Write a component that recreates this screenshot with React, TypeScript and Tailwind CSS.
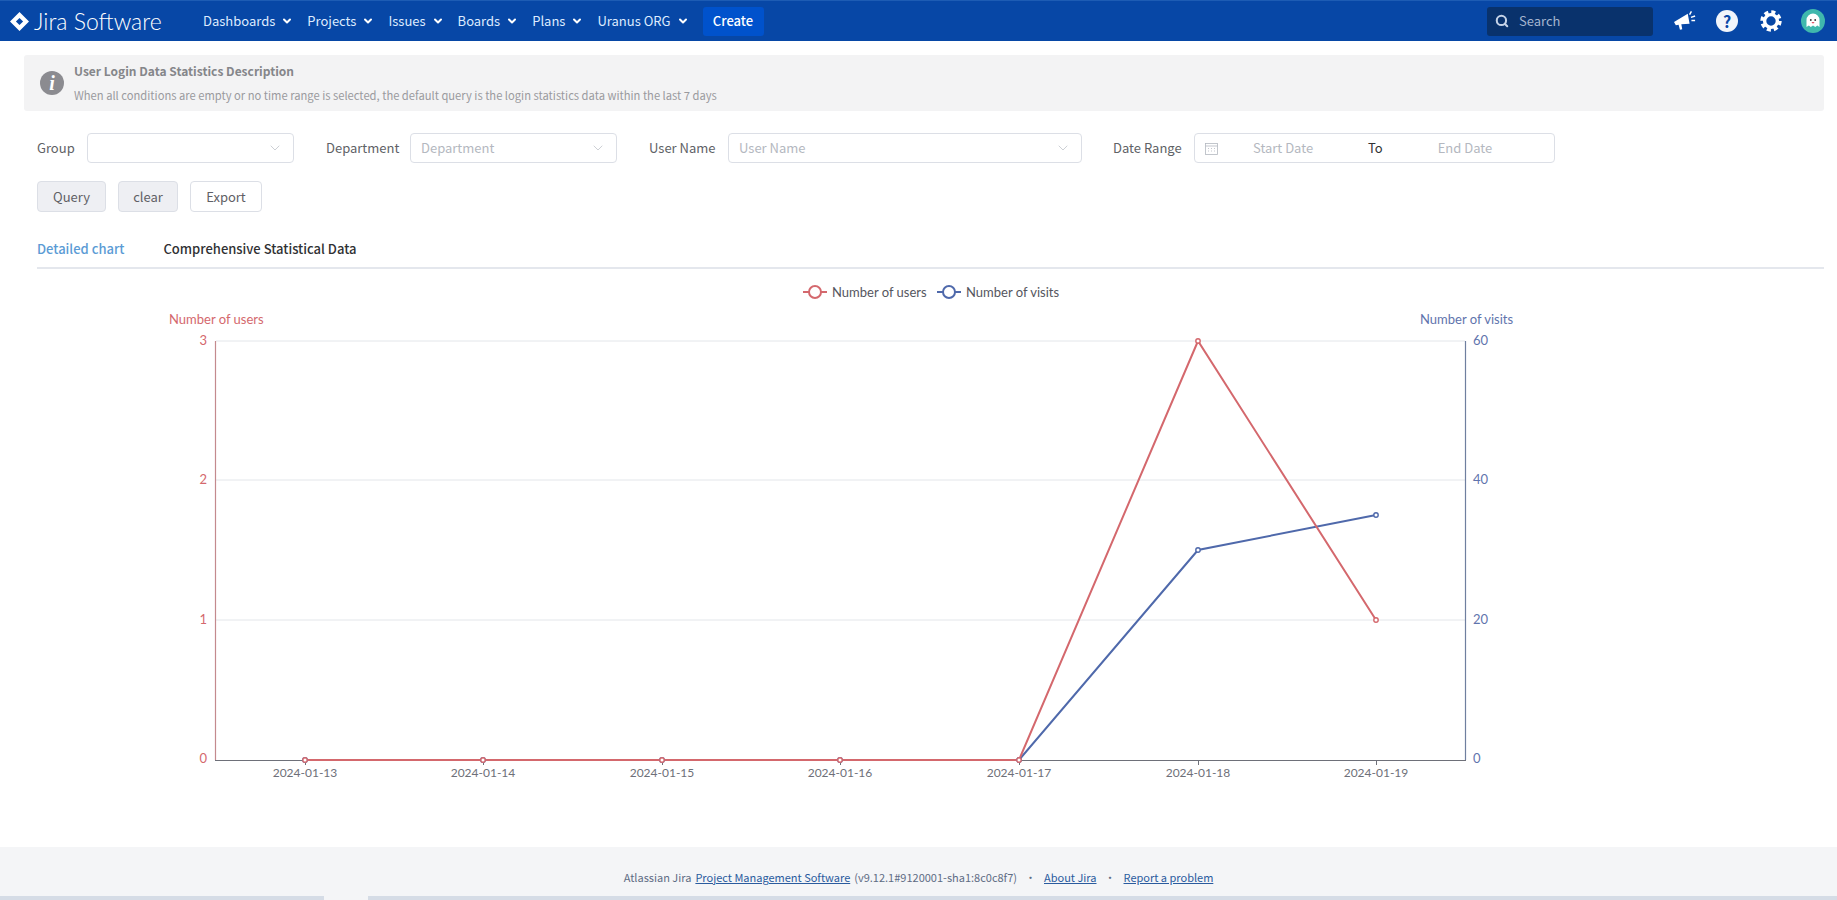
import { ChevronDown, Search } from 'lucide-react';

const navItems = ['Dashboards', 'Projects', 'Issues', 'Boards', 'Plans', 'Uranus ORG'];
const dates = ['2024-01-13', '2024-01-14', '2024-01-15', '2024-01-16', '2024-01-17', '2024-01-18', '2024-01-19'];
const xs = [305, 483, 662, 840, 1019, 1198, 1376];
const users = [760, 760, 760, 760, 760, 341, 620];
const visits = [760, 760, 760, 760, 760, 550, 515];
const RED = '#d4686d';
const BLUE = '#4f69ab';

function Logo() {
    return (
        <div className="flex items-center">
            <svg width="19" height="19" viewBox="0 0 18 18" className="ml-[10px] mr-[5px]">
                <path fillRule="evenodd" fill="#fff" d="M9 0 18 9 9 18 0 9ZM9 5.6 5.6 9 9 12.4 12.4 9Z" />
            </svg>
            <span className="w-[130px] whitespace-nowrap font-['Lato',sans-serif] text-[23px] font-light leading-none text-white">
                Jira Software
            </span>
        </div>
    );
}

function TopNav() {
    return (
        <header className="flex h-[41px] shrink-0 items-center border-t border-[#1d5cb4] bg-[#0747a6] pr-[12px]">
            <Logo />
            <nav className="ml-[39px] flex items-center text-[13px] text-[#deebff]">
                {navItems.map((item) => (
                    <a key={item} className="mr-[14px] flex items-center whitespace-nowrap">
                        {item}
                        <ChevronDown className="ml-[6px] h-[12px] w-[12px] text-white" strokeWidth={4} />
                    </a>
                ))}
            </nav>
            <button className="flex h-[29px] w-[61px] items-center justify-center rounded-[3px] bg-[#0052cc] text-[13px] font-medium text-white">
                Create
            </button>
            <div className="ml-auto flex h-[29px] w-[166px] items-center rounded-[3px] bg-[#09326c] pl-[8px] text-[13px] text-[#a5b5cf]">
                <Search className="mr-[10px] h-[14px] w-[14px] text-[#c5d3e8]" strokeWidth={3.5} />
                Search
            </div>
            <svg width="24" height="22" viewBox="0 0 26 24" className="ml-[20px]">
                <path fill="#fff" d="M1 13 16 4 18 15 9 15.5 10 21 7.5 21.5 6 16 3 16.5Z" />
                <path stroke="#fff" strokeWidth="1.6" fill="none" d="M18 5 20 1.5M19.5 8 24 6.5M20 11.5 24 11.5" />
            </svg>
            <div className="ml-[19px] flex h-[22px] w-[22px] items-center justify-center rounded-full bg-[#f1f5fb] text-[16px] font-bold text-[#0747a6]">
                ?
            </div>
            <svg width="22" height="22" viewBox="0 0 22 22" fill="none" stroke="#fff" className="ml-[22px]">
                <circle cx="11" cy="11" r="6.4" strokeWidth="3.4" />
                <circle cx="11" cy="11" r="9" strokeWidth="3.4" strokeDasharray="4.07 3" />
            </svg>
            <svg width="24" height="24" viewBox="0 0 24 24" className="ml-[19px]">
                <circle cx="12" cy="12" r="12" fill="#3fb8ad" />
                <path fill="#fff" d="M5.5 18V11a6.5 6.5 0 0 1 13 0v7l-2.2-1.4-2 1.4-2.3-1.4-2.2 1.4-2-1.4Z" />
                <circle cx="9.8" cy="11" r="0.9" fill="#333" />
                <circle cx="14.2" cy="11" r="0.9" fill="#333" />
                <path fill="#e0556b" d="M10.6 13h2.8a1.4 1.4 0 0 1-2.8 0Z" />
            </svg>
        </header>
    );
}

function Banner() {
    return (
        <div className="flex h-[56px] rounded-[3px] bg-[#f3f3f4] pl-[16px] pt-[8px]">
            <div className="mt-[8px] flex h-[24px] w-[24px] shrink-0 items-center justify-center rounded-full bg-[#8b8b90] font-['Liberation_Serif',serif] text-[20px] font-bold italic leading-none text-white">
                i
            </div>
            <div className="ml-[10px]">
                <div className="text-[12px] font-semibold leading-[16px] text-[#85868a]">User Login Data Statistics Description</div>
                <div className="mt-[8px] text-[11.2px] leading-[16px] text-[#9a9a9e]">
                    When all conditions are empty or no time range is selected, the default query is the login statistics data within the last 7 days
                </div>
            </div>
        </div>
    );
}

function SelectBox({ placeholder, className }: { placeholder?: string; className: string }) {
    return (
        <div className={`flex h-[30px] items-center rounded-[4px] border border-[#dcdfe6] pl-[10px] pr-[10px] text-[13px] text-[#b4b8c0] ${className}`}>
            <span>{placeholder}</span>
            <ChevronDown className="ml-auto h-[16px] w-[16px] text-[#b4b8c0]" strokeWidth={1} />
        </div>
    );
}

function Filters() {
    return (
        <div className="mt-[22px] flex items-center text-[13px] text-[#606266]">
            <label className="w-[50px]">Group</label>
            <SelectBox className="w-[207px]" />
            <label className="ml-[32px] w-[84px]">Department</label>
            <SelectBox className="w-[207px]" placeholder="Department" />
            <label className="ml-[32px] w-[79px]">User Name</label>
            <SelectBox className="w-[354px]" placeholder="User Name" />
            <label className="ml-[31px] w-[81px]">Date Range</label>
            <div className="flex h-[30px] w-[361px] items-center whitespace-nowrap rounded-[4px] border border-[#dcdfe6] pl-[10px] text-[13px] text-[#b4b8c0]">
                <svg width="13" height="13" viewBox="0 0 13 13" fill="none" stroke="#b4b8c0" strokeWidth="0.8">
                    <rect x="0.5" y="1.5" width="12" height="11" />
                    <path d="M0.5 4h12M3 6.5h1M6 6.5h1M9 6.5h1M3 9h1M6 9h1M9 9h1" />
                </svg>
                <span className="ml-[35px] w-[61px]">Start Date</span>
                <span className="ml-[54px] text-[#303133]">To</span>
                <span className="ml-[55px]">End Date</span>
            </div>
        </div>
    );
}

function Buttons() {
    return (
        <div className="mt-[18px] flex gap-[12px] text-[13px] text-[#5f6065]">
            <button className="h-[31px] w-[69px] rounded-[4px] border border-[#dcdfe6] bg-[#eeeff3]">Query</button>
            <button className="h-[31px] w-[60px] rounded-[4px] border border-[#dcdfe6] bg-[#eeeff3]">clear</button>
            <button className="h-[31px] w-[72px] rounded-[4px] border border-[#dcdfe6] bg-white">Export</button>
        </div>
    );
}

function Tabs() {
    return (
        <div className="mt-[25px] flex h-[32px] border-b-2 border-[#e4e7ed] pt-[2px] text-[13px]">
            <span className="font-medium text-[#5b9bd5]">Detailed chart</span>
            <span className="ml-[39px] font-medium text-[#303133]">Comprehensive Statistical Data</span>
        </div>
    );
}

function pts(ys: number[]) {
    return ys.map((y, i) => `${xs[i]},${y}`).join(' ');
}

function Chart() {
    const font = "Lato, 'Noto Sans', sans-serif";
    return (
        <svg width="1837" height="579" viewBox="0 268 1837 579" className="block shrink-0" fontFamily={font} fontSize="13">
            {/* legend */}
            <path d="M803 292h24" stroke={RED} strokeWidth="2" />
            <circle cx="815" cy="292" r="6" fill="#fff" stroke={RED} strokeWidth="2" />
            <text x="832" y="297" fill="#55565e">Number of users</text>
            <path d="M937 292h24" stroke={BLUE} strokeWidth="2" />
            <circle cx="949" cy="292" r="6" fill="#fff" stroke={BLUE} strokeWidth="2" />
            <text x="966" y="297" fill="#55565e">Number of visits</text>

            <text x="169" y="324" fill={RED}>Number of users</text>
            <text x="1420" y="324" fill="#5f74ad">Number of visits</text>

            {/* grid */}
            {[341, 480, 620].map((y) => (
                <path key={y} d={`M216 ${y}H1465`} stroke="#e3e6ea" />
            ))}
            <path d="M215.5 341V760" stroke="#c48a8e" strokeWidth="1.2" />
            <path d="M1465.5 341V760" stroke="#6f7f9f" strokeWidth="1.2" />
            <path d="M215 760.5H1466" stroke="#6e7079" strokeWidth="1.2" />
            {xs.map((x) => (
                <path key={x} d={`M${x}.5 760v5`} stroke="#6e7079" />
            ))}

            {/* axis labels */}
            {[['3', 345], ['2', 484], ['1', 624], ['0', 763]].map(([t, y]) => (
                <text key={t} x="207" y={y} textAnchor="end" fill={RED}>{t}</text>
            ))}
            {[['60', 345], ['40', 484], ['20', 624], ['0', 763]].map(([t, y]) => (
                <text key={t} x="1473" y={y} fill="#5f74ad">{t}</text>
            ))}
            {dates.map((d, i) => (
                <text key={d} x={xs[i]} y="777" textAnchor="middle" fill="#6e7079" fontSize="12">{d}</text>
            ))}

            {/* series */}
            <polyline points={pts(visits)} fill="none" stroke={BLUE} strokeWidth="2" />
            <polyline points={pts(users)} fill="none" stroke={RED} strokeWidth="2" />
            {visits.map((y, i) => (
                <circle key={i} cx={xs[i]} cy={y} r="2.2" fill="#fff" stroke={BLUE} strokeWidth="1.4" />
            ))}
            {users.map((y, i) => (
                <circle key={i} cx={xs[i]} cy={y} r="2.2" fill="#fff" stroke={RED} strokeWidth="1.4" />
            ))}
        </svg>
    );
}

function Footer() {
    return (
        <footer className="flex h-[49px] shrink-0 items-end justify-center bg-[#f4f5f7] pb-[11px] text-[11px] leading-[16px] text-[#5e6c84]">
            <span>Atlassian Jira</span>
            <a className="ml-[4px] text-[#2a5b9e] underline">Project Management Software</a>
            <span className="ml-[4px]">(v9.12.1#9120001-sha1:8c0c8f7)</span>
            <span className="mx-[8px]">·</span>
            <a className="text-[#2a5b9e] underline">About Jira</a>
            <span className="mx-[8px]">·</span>
            <a className="text-[#2a5b9e] underline">Report a problem</a>
        </footer>
    );
}

export default function App() {
    return (
        <div className="flex h-[900px] w-[1837px] flex-col overflow-hidden bg-white font-['Noto_Sans_CJK_SC','Noto_Sans',sans-serif]">
            <TopNav />
            <main className="h-[227px] shrink-0 pl-[24px] pr-[13px] pt-[14px]">
                <Banner />
                <div className="pl-[13px]">
                    <Filters />
                    <Buttons />
                    <Tabs />
                </div>
            </main>
            <Chart />
            <Footer />
            <div className="flex h-[4px] shrink-0 bg-[#f4f5f7]">
                <div className="w-[324px] bg-[#d5dce6]" />
                <div className="ml-[44px] flex-1 bg-[#d5dce6]" />
            </div>
        </div>
    );
}
